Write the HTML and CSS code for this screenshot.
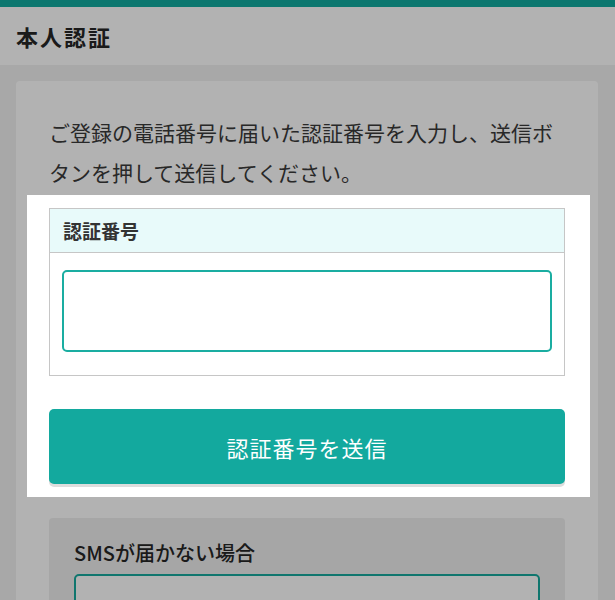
FILE: index.html
```html
<!DOCTYPE html>
<html lang="ja">
<head>
<meta charset="utf-8">
<title>本人認証</title>
<link rel="stylesheet" href="styles.css">
</head>
<body>
<div class="topbar"></div>
<header class="page-header"><h1>本人認証</h1></header>
<main class="main">
  <section class="card">
    <p class="lead">ご登録の電話番号に届いた認証番号を入力し、送信ボタンを押して送信してください。</p>
    <div class="spot">
      <div class="field">
        <div class="field-head">認証番号</div>
        <div class="field-body"><input class="code-input" type="text" aria-label="認証番号"></div>
      </div>
      <button class="submit" type="button">認証番号を送信</button>
    </div>
    <div class="help">
      <h2>SMSが届かない場合</h2>
      <div class="help-input"></div>
      <div class="help-input"></div>
    </div>
  </section>
</main>
</body>
</html>
```
FILE: styles.css
```css
* { box-sizing: border-box; }
html, body { margin: 0; padding: 0; }
body {
  background: #f1f1f1;
  font-family: "Noto Sans CJK JP", "Noto Sans", sans-serif;
  color: #333;
}
.topbar { height: 7px; background: #12ab9f; }
.page-header {
  height: 58px;
  background: #fff;
  display: flex;
  align-items: center;
  padding-left: 16px;
}
.page-header h1 {
  margin: 0;
  font-size: 22px;
  font-weight: 700;
  letter-spacing: 2px;
  color: #262626;
}
.main { padding: 16px 17px 40px 16px; }
.card {
  background: #fff;
  border-radius: 4px;
  padding: 31px 33px 40px 33px;
}
.lead {
  margin: 0 0 3px 0;
  font-size: 21px;
  line-height: 40px;
  color: #3a3a3a;
}
.spot {
  position: relative;
  z-index: 5;
  background: #fff;
  margin: 0 -25px 0 -22px;
  padding: 13px 25px 13px 22px;
  box-shadow: 0 0 0 2000px rgba(0, 0, 0, 0.3);
}
.field { border: 1px solid #c6c6c6; }
.field-head {
  height: 44px;
  background: #e8fafa;
  border-bottom: 1px solid #c6c6c6;
  display: flex;
  align-items: center;
  padding-left: 13px;
  font-size: 19px;
  font-weight: 700;
  color: #333;
}
.field-body { padding: 17px 12px 23px 12px; }
.code-input {
  display: block;
  width: 100%;
  height: 82px;
  border: 2px solid #1aada1;
  border-radius: 5px;
  background: #fff;
  outline: none;
}
.submit {
  display: block;
  width: 100%;
  height: 75px;
  margin-top: 33px;
  border: none;
  border-radius: 5px;
  background: #13a99e;
  box-shadow: 0 3px 0 #dddddd;
  color: #fff;
  font-family: inherit;
  font-size: 22px;
  letter-spacing: 1px;
}
.help {
  margin-top: 21px;
  background: #eeeeee;
  border-radius: 4px;
  padding: 20px 25px 25px 25px;
}
.help h2 {
  margin: 0 0 6px 0;
  font-size: 20px;
  font-weight: 500;
  line-height: 30px;
  color: #262626;
}
.help-input {
  height: 60px;
  border: 2px solid #17aa9e;
  border-radius: 5px;
  background: #fff;
  margin-bottom: 12px;
}
```
